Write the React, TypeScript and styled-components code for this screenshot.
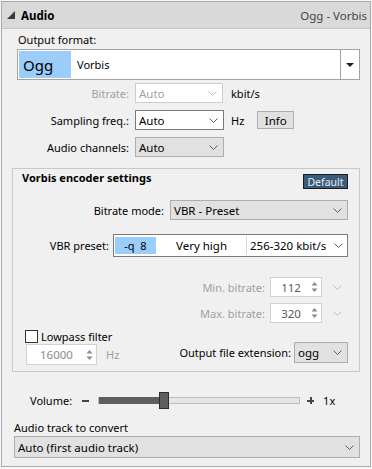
import React from "react";
import styled, { createGlobalStyle } from "styled-components";

const GlobalStyle = createGlobalStyle`
  html, body {
    margin: 0;
    padding: 0;
    background: #f7f7f7;
  }
  body {
    font-family: "Noto Sans", "Open Sans", sans-serif;
    font-size: 11px;
    color: #000;
  }
`;

type Tone = "white" | "grey" | "off";

const toneBorder = { white: "#7a7a7a", grey: "#adadad", off: "#cccccc" };
const toneBg = { white: "#ffffff", grey: "#e1e1e1", off: "#ffffff" };
const toneText = { white: "#000000", grey: "#000000", off: "#a0a0a0" };

const Panel = styled.div`
  margin: 1px 0 0 1px;
  width: 370px;
  height: 466px;
  box-sizing: border-box;
  border: 1px solid #a9a9a9;
  background: #f0f0f0;
  display: flex;
  flex-direction: column;
`;

const Header = styled.div`
  height: 26px;
  border-bottom: 1px solid #c6c6c6;
  background: #d9d9d9;
  display: flex;
  align-items: center;
  padding: 0 3px 0 3px;
`;

const HeaderTitle = styled.span`
  font-weight: bold;
  margin-left: 6px;
  font-size: 11.5px;
`;

const HeaderInfo = styled.span`
  margin-left: auto;
  color: #454545;
  font-size: 11.5px;
`;

const Body = styled.div`
  padding: 3px 10px 0 10px;
  display: flex;
  flex-direction: column;
`;

const Caption = styled.div<{ $indent?: number }>`
  height: 16px;
  line-height: 16px;
  margin-left: ${(p) => p.$indent ?? 0}px;
  margin-bottom: 1px;
`;

const FormatBox = styled.div`
  margin-left: 5px;
  height: 31px;
  box-sizing: border-box;
  border: 1px solid #a3a3a3;
  background: #fff;
  display: flex;
  align-items: stretch;
`;

const Highlight = styled.div<{ $w: number; $big?: boolean }>`
  width: ${(p) => p.$w}px;
  margin: 1px;
  background: #9bcdfb;
  display: flex;
  align-items: center;
  font-size: ${(p) => (p.$big ? 15 : 11)}px;
  padding-left: ${(p) => (p.$big ? 4 : 0)}px;
  justify-content: ${(p) => (p.$big ? "flex-start" : "center")};
  box-sizing: border-box;
`;

const FormatName = styled.div`
  display: flex;
  align-items: center;
  margin-left: 5px;
  flex: 1;
`;

const DropButton = styled.div`
  width: 18px;
  border-left: 1px solid #a3a3a3;
  display: flex;
  align-items: center;
  justify-content: center;
`;

const FormGrid = styled.div`
  margin-top: 3px;
  display: grid;
  grid-template-columns: 117px auto 1fr;
  grid-auto-rows: 20px;
  column-gap: 6px;
  row-gap: 7px;
  align-items: center;
`;

const Label = styled.div<{ $off?: boolean }>`
  text-align: right;
  color: ${(p) => (p.$off ? "#a0a0a0" : "#000")};
  white-space: nowrap;
`;

const Combo = styled.div<{ $w: number; $h?: number; $tone?: Tone }>`
  box-sizing: border-box;
  width: ${(p) => p.$w}px;
  height: ${(p) => p.$h ?? 20}px;
  display: flex;
  align-items: center;
  justify-content: space-between;
  padding: 0 5px 0 3px;
  border: 1px solid ${(p) => toneBorder[p.$tone ?? "grey"]};
  background: ${(p) => toneBg[p.$tone ?? "grey"]};
  color: ${(p) => toneText[p.$tone ?? "grey"]};
  font-size: 11.5px;
`;

const Unit = styled.div<{ $off?: boolean }>`
  display: flex;
  align-items: center;
  padding-left: 1px;
  color: ${(p) => (p.$off ? "#a0a0a0" : "#000")};
`;

const Button = styled.div`
  box-sizing: border-box;
  width: 37px;
  height: 18px;
  margin-left: 13px;
  border: 1px solid #adadad;
  background: #e1e1e1;
  display: flex;
  align-items: center;
  justify-content: center;
  font-size: 11.5px;
`;

const Group = styled.div`
  margin-top: 11px;
  height: 204px;
  box-sizing: border-box;
  border: 1px solid #c8c8c8;
  padding: 1px 11px 6px 0;
  display: flex;
  flex-direction: column;
`;

const GroupTitleRow = styled.div`
  height: 19px;
  display: flex;
  align-items: flex-start;
  justify-content: space-between;
  padding-left: 9px;
`;

const GroupTitle = styled.div`
  font-weight: bold;
  line-height: 16px;
`;

const DefaultButton = styled.div`
  margin-top: 4px;
  width: 45px;
  height: 15px;
  box-sizing: border-box;
  border: 1px solid #1b1b1b;
  background: #3b5b7b;
  color: #e4ecf3;
  font-size: 10.5px;
  display: flex;
  align-items: center;
  justify-content: center;
`;

const Row = styled.div<{ $top: number; $gap?: number; $h?: number }>`
  margin-top: ${(p) => p.$top}px;
  height: ${(p) => p.$h ?? 20}px;
  display: flex;
  align-items: center;
  justify-content: flex-end;
  gap: ${(p) => p.$gap ?? 6}px;
`;

const PresetBox = styled.div`
  box-sizing: border-box;
  width: 235px;
  height: 23px;
  border: 1px solid #7a7a7a;
  background: #fff;
  display: flex;
  align-items: stretch;
  padding: 1px 0;
  font-size: 11.5px;
`;

const PresetQuality = styled.div`
  width: 89px;
  display: flex;
  align-items: center;
  justify-content: center;
  border-right: 1px solid #d9d9d9;
`;

const PresetRate = styled.div`
  flex: 1;
  display: flex;
  align-items: center;
  justify-content: space-between;
  padding: 0 4px 0 3px;
`;

const Spin = styled.div<{ $w: number; $h?: number; $dim?: boolean }>`
  box-sizing: border-box;
  width: ${(p) => p.$w}px;
  height: ${(p) => p.$h ?? 20}px;
  border: 1px solid #d2d2d2;
  background: #fff;
  display: flex;
  align-items: center;
  justify-content: space-between;
  padding: 0 3px 0 0;
  color: ${(p) => (p.$dim ? "#8a8a8a" : "#5a5a5a")};
  font-size: 11.5px;
`;

const SpinValue = styled.span`
  flex: 1;
  text-align: center;
`;

const ChevronSlot = styled.div`
  width: 21px;
  display: flex;
  justify-content: center;
`;

const BottomArea = styled.div`
  margin-top: 7px;
  display: flex;
  align-items: flex-end;
  justify-content: space-between;
`;

const LeftCol = styled.div`
  padding-left: 12px;
  display: flex;
  flex-direction: column;
`;

const CheckRow = styled.label`
  height: 13px;
  display: flex;
  align-items: center;
  gap: 3px;
  line-height: 13px;
`;

const CheckBox = styled.span`
  width: 13px;
  height: 13px;
  box-sizing: border-box;
  border: 1px solid #333;
  background: #fff;
`;

const HzRow = styled.div`
  margin-top: 1px;
  margin-left: 1px;
  display: flex;
  align-items: center;
  gap: 8px;
`;

const ExtRow = styled.div`
  margin-bottom: 2px;
  display: flex;
  align-items: center;
  gap: 3px;
`;

const VolumeRow = styled.div`
  margin-top: 20px;
  height: 17px;
  padding-left: 18px;
  display: flex;
  align-items: center;
`;

const VolumeLabel = styled.span`
  margin-right: 10px;
`;

const Sign = styled.span`
  width: 7px;
  height: 2px;
  background: #444;
  position: relative;
`;

const PlusSign = styled(Sign)`
  &::after {
    content: "";
    position: absolute;
    left: 2.5px;
    top: -2.5px;
    width: 2px;
    height: 7px;
    background: #444;
  }
`;

const Factor = styled.span`
  margin-left: 9px;
`;

const Track = styled.div`
  margin: 0 7px 0 9px;
  width: 202px;
  height: 7px;
  box-sizing: border-box;
  border: 1px solid #bdbdbd;
  background: #e6e6e6;
  display: flex;
  align-items: center;
`;

const TrackFill = styled.div`
  height: 7px;
  background: #5f5f5f;
`;

const Thumb = styled.div`
  width: 10px;
  height: 17px;
  box-sizing: border-box;
  background: #5e5e5e;
  border: 1px solid #2e2e2e;
  flex: none;
`;

const TrackCombo = styled(Combo)`
  margin-left: 2px;
`;

const Chevron = ({ dim }: { dim?: boolean }) => (
  <svg width="9" height="5" viewBox="0 0 9 5">
    <path d="M0.5 0.5 L4.5 4.5 L8.5 0.5" fill="none" stroke={dim ? "#bdbdbd" : "#5f5f5f"} strokeWidth="1" />
  </svg>
);

const SpinArrows = () => (
  <svg width="7" height="12" viewBox="0 0 7 12">
    <path d="M3.5 1 L6.5 4.5 L0.5 4.5 Z" fill="#8c8c8c" />
    <path d="M3.5 11 L6.5 7.5 L0.5 7.5 Z" fill="#8c8c8c" />
  </svg>
);

const volume = 0.3;

export default function App() {
  return (
    <>
      <GlobalStyle />
      <Panel>
        <Header>
          <svg width="8" height="8" viewBox="0 0 8 8" style={{ marginLeft: 2 }}>
            <polygon points="8,0 8,8 0,8" fill="#3a3a3a" />
          </svg>
          <HeaderTitle>Audio</HeaderTitle>
          <HeaderInfo>Ogg - Vorbis</HeaderInfo>
        </Header>
        <Body>
          <Caption $indent={6}>Output format:</Caption>
          <FormatBox>
            <Highlight $w={52} $big>Ogg</Highlight>
            <FormatName>Vorbis</FormatName>
            <DropButton>
              <svg width="8" height="4" viewBox="0 0 8 4">
                <polygon points="0,0 8,0 4,4" fill="#1e1e1e" />
              </svg>
            </DropButton>
          </FormatBox>

          <FormGrid>
            <Label $off>Bitrate:</Label>
            <Combo $w={88} $tone="off">
              Auto <Chevron dim />
            </Combo>
            <Unit>kbit/s</Unit>

            <Label>Sampling freq.:</Label>
            <Combo $w={89} $tone="white">
              Auto <Chevron />
            </Combo>
            <Unit>
              Hz<Button>Info</Button>
            </Unit>

            <Label>Audio channels:</Label>
            <Combo $w={89}>
              Auto <Chevron />
            </Combo>
            <span />
          </FormGrid>

          <Group>
            <GroupTitleRow>
              <GroupTitle>Vorbis encoder settings</GroupTitle>
              <DefaultButton>Default</DefaultButton>
            </GroupTitleRow>

            <Row $top={11}>
              <Label>Bitrate mode:</Label>
              <Combo $w={178}>
                VBR - Preset <Chevron />
              </Combo>
            </Row>

            <Row $top={14} $h={23} $gap={4}>
              <Label>VBR preset:</Label>
              <PresetBox>
                <Highlight $w={41}>-q&nbsp;&nbsp;8</Highlight>
                <PresetQuality>Very high</PresetQuality>
                <PresetRate>
                  256-320 kbit/s <Chevron />
                </PresetRate>
              </PresetBox>
            </Row>

            <Row $top={20} $gap={5}>
              <Label $off>Min. bitrate:</Label>
              <Spin $w={52}>
                <SpinValue>112</SpinValue>
                <SpinArrows />
              </Spin>
              <ChevronSlot>
                <Chevron dim />
              </ChevronSlot>
            </Row>

            <Row $top={6} $gap={5}>
              <Label $off>Max. bitrate:</Label>
              <Spin $w={52}>
                <SpinValue>320</SpinValue>
                <SpinArrows />
              </Spin>
              <ChevronSlot>
                <Chevron dim />
              </ChevronSlot>
            </Row>

            <BottomArea>
              <LeftCol>
                <CheckRow>
                  <CheckBox />
                  Lowpass filter
                </CheckRow>
                <HzRow>
                  <Spin $w={71} $h={21} $dim>
                    <SpinValue>16000</SpinValue>
                    <SpinArrows />
                  </Spin>
                  <Unit $off>Hz</Unit>
                </HzRow>
              </LeftCol>
              <ExtRow>
                <Label>Output file extension:</Label>
                <Combo $w={54} $h={21}>
                  ogg <Chevron />
                </Combo>
              </ExtRow>
            </BottomArea>
          </Group>

          <VolumeRow>
            <VolumeLabel>Volume:</VolumeLabel>
            <Sign />
            <Track>
              <TrackFill style={{ width: `${volume * 100}%` }} />
              <Thumb />
            </Track>
            <PlusSign />
            <Factor>1x</Factor>
          </VolumeRow>

          <Caption $indent={2} style={{ marginTop: 11, marginBottom: 0 }}>
            Audio track to convert
          </Caption>
          <TrackCombo $w={346} $h={22}>
            Auto (first audio track) <Chevron />
          </TrackCombo>
        </Body>
      </Panel>
    </>
  );
}
